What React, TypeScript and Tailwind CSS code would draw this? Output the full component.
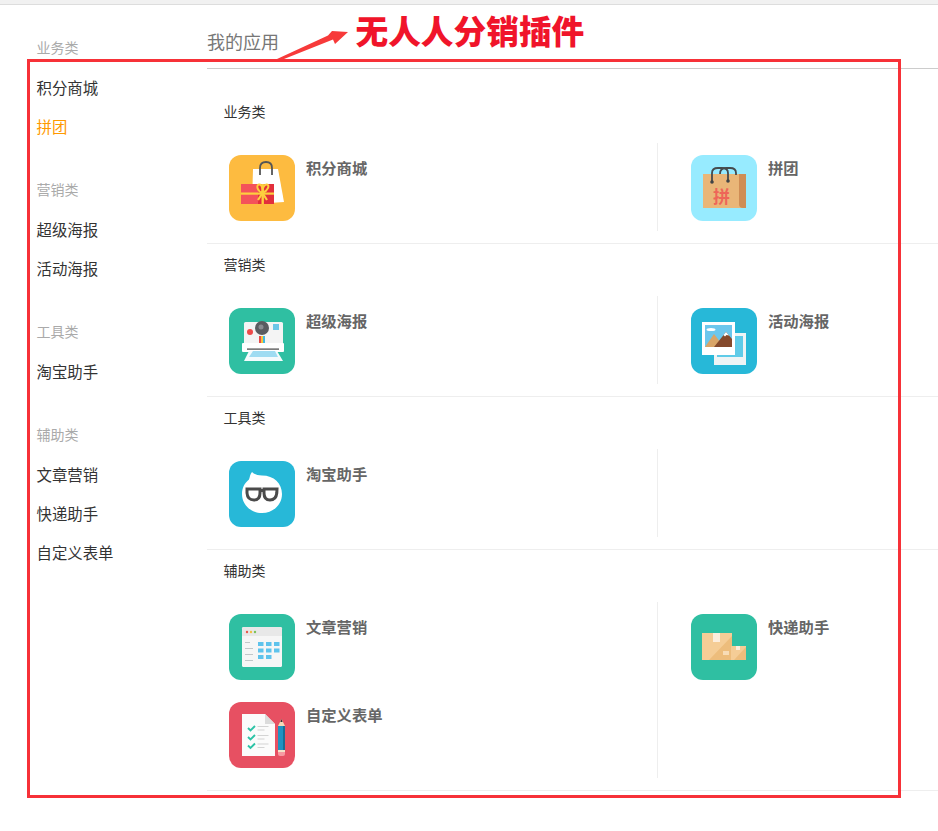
import React from "react";

const font = { fontFamily: '"Liberation Sans", "Noto Sans CJK SC", sans-serif' };

const Svg = ({ children }: { children: React.ReactNode }) => (
  <svg viewBox="0 0 66 66" className="w-[66px] h-[66px] shrink-0 block">{children}</svg>
);

const Gift = () => (
  <Svg>
    <rect width="66" height="66" rx="12" fill="#fdbb40" />
    <polygon points="24,14 49,14 55,47 23,49" fill="#fff" />
    <path d="M31 20 V13 Q31 7 37 7 Q43 7 43 13 V20" fill="none" stroke="#555" strokeWidth="1.8" />
    <rect x="12" y="29" width="33" height="20" fill="#e22f3c" />
    <rect x="12" y="29" width="17" height="20" fill="#f4525a" />
    <rect x="12" y="37.5" width="33" height="2.2" fill="#fdcf3e" />
    <rect x="32.5" y="29" width="2.4" height="20" fill="#fdcf3e" />
    <path d="M33.5 38 C28 36 27 30 30 29.5 C33 29 34 34 33.5 38 C33 34 35 29 38 29.5 C41 30 39 36 33.5 38 Z" fill="none" stroke="#fdcf3e" strokeWidth="2" />
    <path d="M33.5 38 L29 45 M33.5 38 L38 45" stroke="#fdcf3e" strokeWidth="2.2" />
  </Svg>
);

const Bag = () => (
  <Svg>
    <rect width="66" height="66" rx="12" fill="#97ebff" />
    <rect x="12" y="19" width="43" height="34" fill="#e9b678" />
    <path d="M48 19 H55 V53 H52 Q48 53 48 49 Z" fill="#cf8d55" />
    <path d="M21 26 V18 Q21 13 27 13 H31 Q37 13 37 18 V26" fill="none" stroke="#454a4c" strokeWidth="1.8" />
    <path d="M29 19 Q29 13 35 13 H39 Q45 13 45 18 V20" fill="none" stroke="#454a4c" strokeWidth="1.8" />
    <circle cx="21" cy="27" r="1.8" fill="#3f4446" />
    <circle cx="37" cy="26" r="1.8" fill="#3f4446" />
    <text x="22" y="48" fontSize="17" fontWeight="700" fill="#ee6558" style={{ fontFamily: '"Noto Sans CJK SC", sans-serif' }}>拼</text>
  </Svg>
);

const Camera = () => (
  <Svg>
    <rect width="66" height="66" rx="12" fill="#2fbfa2" />
    <rect x="15" y="14" width="39" height="24" rx="1.5" fill="#f4f4f4" />
    <circle cx="33" cy="20" r="7" fill="#5a5c60" />
    <circle cx="32" cy="19" r="2.5" fill="#8a8c90" />
    <circle cx="21" cy="24" r="3" fill="#ee4a4a" />
    <rect x="44" y="16" width="6" height="6" fill="#6cc6e8" />
    <rect x="30" y="28" width="2" height="9" fill="#e64b4b" />
    <rect x="32" y="28" width="2" height="9" fill="#f7c33a" />
    <rect x="34" y="28" width="2" height="9" fill="#3fb9e0" />
    <rect x="13" y="35" width="42" height="9" rx="1" fill="#fff" />
    <rect x="18" y="40.5" width="32" height="1.2" fill="#444" />
    <polygon points="20,43 48,43 54,53 15,53" fill="#f4fbfd" />
    <polygon points="24,43 46,43 49,49 20,49" fill="#9fdcf2" />
  </Svg>
);

const Photo = () => (
  <Svg>
    <rect width="66" height="66" rx="12" fill="#27b8d8" />
    <rect x="23" y="25" width="32" height="32" fill="#eef4f5" />
    <rect x="26" y="28" width="26" height="21" fill="#5fcbe8" />
    <rect x="11" y="14" width="33" height="33" fill="#fff" />
    <rect x="14" y="17" width="27" height="22" fill="#6cc7ed" />
    <polygon points="14,39 23,26 33,39" fill="#d9a568" />
    <polygon points="23,39 35,24 41,31 41,39" fill="#84492c" />
    <polygon points="32.5,27 35,24 38,27.5 35.5,27 34,28.5" fill="#fff" />
    <ellipse cx="20" cy="21.5" rx="4.5" ry="1.6" fill="#fff" />
  </Svg>
);

const Glasses = () => (
  <Svg>
    <rect width="66" height="66" rx="12" fill="#27b8d8" />
    <path d="M23 11 C25 13 28 14.5 33 14.5 C45 14.5 53 22.5 53 33 C53 44 44 52 33 52 C22 52 13 44 13 33 C13 27 15.5 22 20 18.5 C21 16 21 13 23 11 Z" fill="#fff" />
    <path d="M18 28 H31 V32 Q31 39 25 39 Q18.5 39 18 32 Z" fill="none" stroke="#4a4a4a" strokeWidth="3" />
    <path d="M35 28 H48 L47.8 32 Q47 39 41 39 Q35 39 35 32 Z" fill="none" stroke="#4a4a4a" strokeWidth="3" />
    <path d="M30 29.5 H36" stroke="#4a4a4a" strokeWidth="3" />
  </Svg>
);

const Calendar = () => (
  <Svg>
    <rect width="66" height="66" rx="12" fill="#2fbfa2" />
    <rect x="13" y="13" width="40" height="40" rx="1.5" fill="#f6f6f6" />
    <path d="M13 14.5 Q13 13 14.5 13 H51.5 Q53 13 53 14.5 V22 H13 Z" fill="#e8e8e8" />
    <circle cx="18" cy="18" r="1.2" fill="#e8574a" />
    <circle cx="22" cy="18" r="1.2" fill="#f0c040" />
    <circle cx="26" cy="18" r="1.2" fill="#7cc35a" />
    {[28, 34, 40, 46].map((y, i) => (
      <rect key={y} x="16" y={y} width={i === 0 ? 5 : 8} height="0.9" fill="#bcc2c4" />
    ))}
    {[28, 34.5].map((y) =>
      [29, 37, 45].map((x) => <rect key={`${x}${y}`} x={x} y={y} width="5.5" height="4" fill="#5fc3ec" />)
    )}
    {[29, 37].map((x) => <rect key={x} x={x} y="41" width="5.5" height="4" fill="#5fc3ec" />)}
  </Svg>
);

const Boxes = () => (
  <Svg>
    <rect width="66" height="66" rx="12" fill="#2fbfa2" />
    <rect x="11" y="19" width="30" height="27" fill="#f5cd96" />
    <polygon points="41,22 41,46 18,46" fill="#edbd7c" />
    <rect x="22" y="19" width="7" height="9" fill="#fdeedd" />
    <rect x="32" y="37" width="6" height="4" fill="#f8dcb6" />
    <rect x="40" y="32" width="15" height="14" fill="#f5cd96" />
    <polygon points="55,33 55,46 43,46" fill="#edbd7c" />
    <rect x="45" y="32" width="4" height="4" fill="#fdeedd" />
  </Svg>
);

const Form = () => (
  <Svg>
    <rect width="66" height="66" rx="12" fill="#e75062" />
    <polygon points="13,12 36,12 46,22 46,54 13,54" fill="#fbfbfb" />
    <polygon points="36,12 46,22 36,22" fill="#dcdcdc" />
    {[26, 35, 43.5].map((y) => (
      <g key={y}>
        <path d={`M19 ${y} L21.5 ${y + 2.5} L26 ${y - 2}`} fill="none" stroke="#2cc3a6" strokeWidth="1.9" />
        <rect x="28.5" y={y - 2} width="11" height="1" fill="#d4d4d4" />
        <rect x="28.5" y={y + 1.5} width="7" height="1" fill="#d4d4d4" />
      </g>
    ))}
    <polygon points="52.5,17 49,24 56,24" fill="#f3d9b8" />
    <polygon points="52.5,17 51.4,20 53.6,20" fill="#333" />
    <rect x="49" y="24" width="7" height="24" fill="#1f92c2" />
    <rect x="54" y="24" width="2" height="24" fill="#166f96" />
    <rect x="49" y="48" width="7" height="2" fill="#f3e3c8" />
    <path d="M49 50 H56 V52 Q56 54 54 54 H51 Q49 54 49 52 Z" fill="#f79aa2" />
  </Svg>
);

const App_ = ({ icon, name }: { icon: React.ReactNode; name: string }) => (
  <div className="flex h-[88px] items-start pt-[12px]">
    {icon}
    <div className="ml-[11px] h-[28px] leading-[28px] text-[15.3px] font-bold text-[#666666] whitespace-nowrap">{name}</div>
  </div>
);

type Item = { icon: React.ReactNode; name: string };
const sections: { title: string; left: Item[]; right: Item[] }[] = [
  { title: "业务类", left: [{ icon: <Gift />, name: "积分商城" }], right: [{ icon: <Bag />, name: "拼团" }] },
  { title: "营销类", left: [{ icon: <Camera />, name: "超级海报" }], right: [{ icon: <Photo />, name: "活动海报" }] },
  { title: "工具类", left: [{ icon: <Glasses />, name: "淘宝助手" }], right: [] },
  {
    title: "辅助类",
    left: [{ icon: <Calendar />, name: "文章营销" }, { icon: <Form />, name: "自定义表单" }],
    right: [{ icon: <Boxes />, name: "快递助手" }],
  },
];

const nav: { title: string; items: string[] }[] = [
  { title: "业务类", items: ["积分商城", "拼团"] },
  { title: "营销类", items: ["超级海报", "活动海报"] },
  { title: "工具类", items: ["淘宝助手"] },
  { title: "辅助类", items: ["文章营销", "快递助手", "自定义表单"] },
];

export default function App() {
  return (
    <div className="relative w-[938px] h-[831px] overflow-hidden bg-white" style={font}>
      <div className="h-[5px] bg-[#f1f1f1] border-b border-[#dddddd]" />
      <div className="flex">
        <aside className="w-[207px] shrink-0 pl-[36.5px] pt-[23px]">
          {nav.map((g) => (
            <div key={g.title} className="mb-[24px]">
              <div className="h-[40px] leading-[40px] text-[14px] text-[#aaaaaa]">{g.title}</div>
              {g.items.map((it) => (
                <div
                  key={it}
                  className={`h-[39px] leading-[42px] text-[15.4px] ${it === "拼团" ? "text-[#ff9900]" : "text-[#333333]"}`}
                >
                  {it}
                </div>
              ))}
            </div>
          ))}
        </aside>
        <main className="flex-1 min-w-0">
          <div className="h-[64px] border-b border-[#cccccc] pt-[23px] text-[18px] leading-[30px] text-[#777777]">我的应用</div>
          {sections.map((s, i) => (
            <section key={s.title} className={`border-b border-[#eeeeee] pb-[12px] ${i === 0 ? "pt-[22px]" : ""}`}>
              <div className="h-[52px] pl-[16.5px] pt-[10px] text-[14px] leading-[22px] text-[#333333]">{s.title}</div>
              <div className="flex">
                <div className="w-[451px] border-r border-[#eeeeee] pl-[22px]">
                  {s.left.map((a) => <App_ key={a.name} {...a} />)}
                </div>
                <div className="flex-1 pl-[33px]">
                  {s.right.map((a) => <App_ key={a.name} {...a} />)}
                </div>
              </div>
            </section>
          ))}
        </main>
      </div>
      {/* annotation overlay */}
      <div className="absolute left-[27px] top-[59px] w-[874px] h-[739px] border-[3px] border-[#f73138]" />
      <svg className="absolute left-0 top-0 w-[938px] h-[70px]" viewBox="0 0 938 70">
        <polygon points="277,59 328,35.5 332,31 348,32 335,44 333,39.5 284,59" fill="#f73a3a" />
      </svg>
      <div className="absolute left-[355.5px] top-[8px] text-[32.7px] leading-[44px] font-black text-[#f0142a] whitespace-nowrap" style={{ fontFamily: '"Noto Sans CJK SC", sans-serif' }}>
        无人人分销插件
      </div>
    </div>
  );
}
